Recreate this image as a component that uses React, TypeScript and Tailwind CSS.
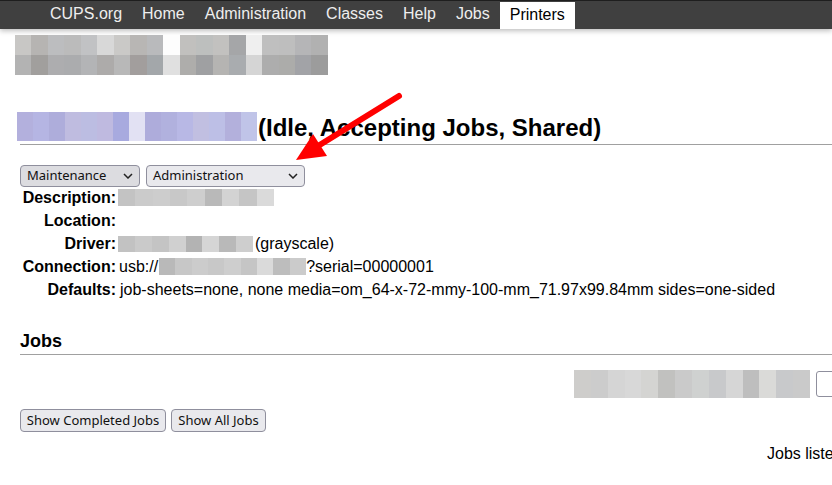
import React from "react";

const headRow1 = ["#c8c7c5", "#b6b4b2", "#bcbdbf", "#bbbbbb", "#c1c2c4", "#d8d8d8", "#cac9c7", "#b8b6b4", "#b9babc", "#fdfdfd", "#c1c0be", "#bdbfbe", "#c2c1bf", "#a5a6a8", "#efefef", "#bfbfbf", "#bebebe", "#b5b5b7", "#b1b1b1"];
const headRow2 = ["#b3b3b3", "#a19f9d", "#adadaf", "#abacae", "#b3b4b6", "#adabaa", "#b8b8b8", "#a29e9d", "#a3a7aa", "#e0e0e0", "#aeadab", "#9fa0a2", "#b5b4b2", "#a9acaf", "#d5d5d5", "#adadad", "#acacaa", "#a2a3a7", "#9c9c9c"];
const nameTiles = ["#b3b0dd", "#b5b5e3", "#aeaddb", "#bfbce0", "#bcbde2", "#bfbae0", "#a8aadf", "#e2e1f3", "#aeacdb", "#b1b1de", "#b8b8e5", "#c1bfe1", "#bdbfe6", "#b3b0dc", "#c0c4e8"];
const descTiles = ["#c3c3c3", "#cbcbcb", "#cdcdcd", "#c8c8c8", "#cecece", "#b9b9b9", "#d3d3d3", "#c5c5c5", "#dadada"];
const driverTiles = ["#c2c2c2", "#cacaca", "#c4c4c4", "#d0d0d0", "#b3b3b3", "#d5d5d5", "#b9b9b9", "#cecece"];
const connTiles = ["#b9b9b9", "#c7c7c7", "#cccccc", "#c8c8c8", "#cecece", "#c5c5c5", "#dadada", "#bdbdbd", "#cbcbcb"];
const jobsTiles = ["#cecdcb", "#cccccc", "#d5d5d5", "#d8d8d8", "#d4d4d2", "#c1c1bf", "#cacaca", "#cfd1d0", "#c8c9cb", "#d6d6d6", "#bebebe", "#dadad8", "#c8c9cb", "#cacaca"];

// blurred (redacted) strip: a row of flat tiles
function Pix({ tiles, className }: { tiles: string[]; className: string }) {
  return (
    <div className={`flex ${className}`}>
      {tiles.map((c, i) => (
        <div key={i} className="flex-1 h-full" style={{ background: c }} />
      ))}
    </div>
  );
}

function Chevron() {
  return (
    <svg width="10" height="6" viewBox="0 0 10 6" className="shrink-0">
      <path d="M1 1l4 4 4-4" fill="none" stroke="#222" strokeWidth="1.5" />
    </svg>
  );
}

function Select({ label, className }: { label: string; className: string }) {
  return (
    <div
      className={`h-[22px] flex items-center justify-between pl-[6px] pr-[6px] border border-[#8f8f9d] rounded-[4px] text-[13px] text-[#111] font-['Noto_Sans',sans-serif] ${className}`}
    >
      <span>{label}</span>
      <Chevron />
    </div>
  );
}

function Btn({ label, w }: { label: string; w: string }) {
  return (
    <div
      className={`h-[23px] ${w} flex items-center justify-center border border-[#8f8f9d] rounded-[4px] bg-[#e9e9ed] text-[13px] text-[#111] font-['Noto_Sans',sans-serif]`}
    >
      {label}
    </div>
  );
}

const navItems = ["CUPS.org", "Home", "Administration", "Classes", "Help", "Jobs"];

export default function App() {
  return (
    <div className="relative w-[832px] h-[485px] overflow-hidden bg-white text-black font-['Liberation_Sans',Arial,sans-serif]">
      {/* top navigation */}
      <div className="h-[29px] bg-[#404040] border-t border-[#1e1e1e] flex items-end pl-[40px] shadow-[0_2px_5px_rgba(0,0,0,0.25)]">
        {navItems.map((n) => (
          <div key={n} className="h-[28px] px-[10px] pb-[3px] flex items-center text-[16px] text-[#eeeeee]">
            {n}
          </div>
        ))}
        <div className="h-[27px] px-[10px] pb-[2px] flex items-center text-[16px] text-black bg-white">Printers</div>
      </div>

      <div className="ml-[15px] mt-[6px] w-[313px]">
        <Pix tiles={headRow1} className="h-[20px]" />
        <Pix tiles={headRow2} className="h-[20px]" />
      </div>

      {/* printer title */}
      <div className="mt-[37px] ml-[17px] flex items-center h-[29px]">
        <Pix tiles={nameTiles} className="h-[29px] w-[240px]" />
        <h1 className="ml-[1px] text-[24px] font-bold leading-[29px] pt-[1px]">(Idle, Accepting Jobs, Shared)</h1>
      </div>
      <div className="ml-[20px] mt-[3px] h-px bg-[#a0a0a0]" />

      <div className="ml-[20px] mt-[20px] flex gap-[6px]">
        <Select label="Maintenance" className="w-[120px] bg-[#dcdce0]" />
        <Select label="Administration" className="w-[159px] bg-[#e9e9ed]" />
      </div>

      {/* printer details */}
      <div className="text-[16px] leading-[23px] -mt-px">
        <div className="flex items-center h-[23px]">
          <div className="w-[116px] text-right font-bold">Description:</div>
          <Pix tiles={descTiles} className="ml-[2px] w-[156px] h-[17px]" />
        </div>
        <div className="flex items-center h-[23px]">
          <div className="w-[116px] text-right font-bold">Location:</div>
        </div>
        <div className="flex items-center h-[23px]">
          <div className="w-[116px] text-right font-bold">Driver:</div>
          <Pix tiles={driverTiles} className="ml-[2px] w-[135px] h-[16px]" />
          <span className="ml-[2px]">(grayscale)</span>
        </div>
        <div className="flex items-center h-[23px]">
          <div className="w-[116px] text-right font-bold">Connection:</div>
          <span className="ml-[3px]">usb://</span>
          <Pix tiles={connTiles} className="ml-px w-[147px] h-[17px]" />
          <span>?serial=00000001</span>
        </div>
        <div className="flex items-center h-[23px] whitespace-nowrap">
          <div className="w-[116px] text-right font-bold">Defaults:</div>
          <span className="ml-[4px]">job-sheets=none, none media=om_64-x-72-mmy-100-mm_71.97x99.84mm sides=one-sided</span>
        </div>
      </div>

      {/* jobs section */}
      <h2 className="ml-[20px] mt-[30px] text-[18px] font-bold leading-[21px]">Jobs</h2>
      <div className="ml-[20px] mt-[2px] h-px bg-[#a0a0a0]" />

      <div className="mt-[15px] flex justify-end h-[28px]">
        <Pix tiles={jobsTiles} className="w-[236px] h-[28px]" />
        <div className="ml-[6px] mr-[-30px] w-[46px] h-[26px] mt-px border border-[#8f8f9d] rounded-[3px]" />
      </div>

      <div className="ml-[20px] mt-[11px] flex gap-[5px]">
        <Btn label="Show Completed Jobs" w="w-[146px]" />
        <Btn label="Show All Jobs" w="w-[95px]" />
      </div>

      <div className="mt-[11px] ml-[767px] text-[16px] whitespace-nowrap leading-[22px]">Jobs listed 1 - 0 of 0</div>

      {/* red annotation arrow */}
      <svg className="absolute left-0 top-0 pointer-events-none" width="832" height="485">
        <line x1="399" y1="96" x2="318" y2="146" stroke="#f00" strokeWidth="6" strokeLinecap="round" />
        <polygon points="296,160 313,134 327,156" fill="#f00" />
      </svg>
    </div>
  );
}
